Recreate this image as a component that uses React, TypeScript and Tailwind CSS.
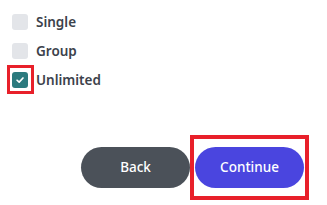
import { useState } from 'react';

const options = ['Single', 'Group', 'Unlimited'];

export default function App() {
  const [selected, setSelected] = useState('Unlimited');

  return (
    <div className="relative w-[327px] h-[205px] bg-white overflow-hidden" style={{ fontFamily: '"Noto Sans", "Open Sans", sans-serif' }}>
      <div className="flex flex-col gap-[13px] pl-[12px] pt-[14px]">
        {options.map((opt) => {
          const checked = selected === opt;
          return (
            <label key={opt} className="flex items-center gap-[8px] cursor-pointer" onClick={() => setSelected(opt)}>
              <span
                className={`w-[16px] h-[16px] rounded-[3px] flex items-center justify-center ${
                  checked ? 'bg-[#2b7a7e]' : 'bg-[#e3e5e9]'
                }`}
              >
                {checked && (
                  <svg viewBox="0 0 12 12" className="w-[10px] h-[10px]">
                    <path d="M2.5 6.3 L5 8.6 L9.6 3.6" fill="none" stroke="white" strokeWidth="2" strokeLinecap="round" strokeLinejoin="round" />
                  </svg>
                )}
              </span>
              <span className="text-[13.5px] font-semibold text-[#3c424b] leading-[16px]">{opt}</span>
            </label>
          );
        })}
      </div>

      <div className="flex justify-end gap-[5px] pr-[23px] mt-[59px]">
        <button className="w-[109px] h-[41px] rounded-full bg-[#4b5159] text-white text-[13.5px] font-medium">
          Back
        </button>
        <button className="w-[109px] h-[41px] rounded-full bg-[#4a45df] text-white text-[13.5px] font-medium">
          Continue
        </button>
      </div>

      {/* annotation boxes */}
      <div className="absolute left-[7px] top-[65px] w-[27px] h-[29px] border-[3px] border-[#e8202a]" />
      <div className="absolute left-[190px] top-[135px] w-[119px] h-[65px] border-[4px] border-[#e8202a]" />
    </div>
  );
}
